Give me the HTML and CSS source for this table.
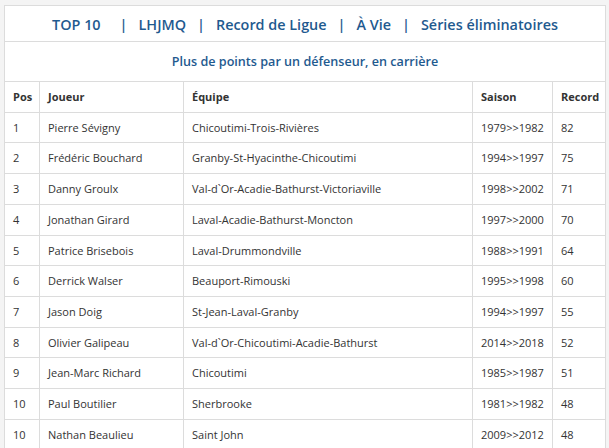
FILE: index.html
```html
<!DOCTYPE html>
<html lang="fr">
<head>
<meta charset="utf-8">
<title>Records LHJMQ</title>
<link rel="stylesheet" href="styles.css">
</head>
<body>
<table class="records">
  <colgroup>
    <col class="c-pos">
    <col class="c-joueur">
    <col class="c-equipe">
    <col class="c-saison">
    <col class="c-record">
  </colgroup>
  <thead>
    <tr class="nav-row">
      <td colspan="5">
        <nav class="nav">
          <a class="nav-link nav-top">TOP 10</a>
          <span class="sep">|</span>
          <a class="nav-link">LHJMQ</a>
          <span class="sep">|</span>
          <a class="nav-link">Record de Ligue</a>
          <span class="sep">|</span>
          <a class="nav-link">À Vie</a>
          <span class="sep">|</span>
          <a class="nav-link">Séries éliminatoires</a>
        </nav>
      </td>
    </tr>
    <tr class="title-row">
      <td colspan="5">Plus de points par un défenseur, en carrière</td>
    </tr>
    <tr class="head-row">
      <th>Pos</th>
      <th>Joueur</th>
      <th>Équipe</th>
      <th>Saison</th>
      <th>Record</th>
    </tr>
  </thead>
  <tbody>
    <tr><td>1</td><td>Pierre Sévigny</td><td>Chicoutimi-Trois-Rivières</td><td>1979&gt;&gt;1982</td><td>82</td></tr>
    <tr><td>2</td><td>Frédéric Bouchard</td><td>Granby-St-Hyacinthe-Chicoutimi</td><td>1994&gt;&gt;1997</td><td>75</td></tr>
    <tr><td>3</td><td>Danny Groulx</td><td>Val-d`Or-Acadie-Bathurst-Victoriaville</td><td>1998&gt;&gt;2002</td><td>71</td></tr>
    <tr><td>4</td><td>Jonathan Girard</td><td>Laval-Acadie-Bathurst-Moncton</td><td>1997&gt;&gt;2000</td><td>70</td></tr>
    <tr><td>5</td><td>Patrice Brisebois</td><td>Laval-Drummondville</td><td>1988&gt;&gt;1991</td><td>64</td></tr>
    <tr><td>6</td><td>Derrick Walser</td><td>Beauport-Rimouski</td><td>1995&gt;&gt;1998</td><td>60</td></tr>
    <tr><td>7</td><td>Jason Doig</td><td>St-Jean-Laval-Granby</td><td>1994&gt;&gt;1997</td><td>55</td></tr>
    <tr><td>8</td><td>Olivier Galipeau</td><td>Val-d`Or-Chicoutimi-Acadie-Bathurst</td><td>2014&gt;&gt;2018</td><td>52</td></tr>
    <tr><td>9</td><td>Jean-Marc Richard</td><td>Chicoutimi</td><td>1985&gt;&gt;1987</td><td>51</td></tr>
    <tr><td>10</td><td>Paul Boutilier</td><td>Sherbrooke</td><td>1981&gt;&gt;1982</td><td>48</td></tr>
    <tr><td>10</td><td>Nathan Beaulieu</td><td>Saint John</td><td>2009&gt;&gt;2012</td><td>48</td></tr>
  </tbody>
</table>
</body>
</html>
```

FILE: styles.css
```css
html, body {
  margin: 0;
  padding: 0;
  background: #f4f4f4;
}

body {
  padding: 5px 4px 0 4px;
  font-family: "Open Sans", "DejaVu Sans", sans-serif;
  color: #333;
}

.records {
  border-collapse: collapse;
  table-layout: fixed;
  width: 601px;
  background: #fff;
  border: 1px solid #dcdcdc;
}

.c-pos { width: 35px; }
.c-joueur { width: 144px; }
.c-equipe { width: 289px; }
.c-saison { width: 80px; }
.c-record { width: 53px; }

.records td,
.records th {
  border: 1px solid #dcdcdc;
  padding: 7px 8px;
  font-size: 11px;
  line-height: 15.7px;
  text-align: left;
  white-space: nowrap;
  overflow: hidden;
}

.records tbody td {
  color: #333;
  font-weight: 400;
}

.records th {
  font-weight: 700;
  color: #333;
}

.nav-row td {
  height: 35px;
  padding: 0;
  text-align: center;
}

.nav {
  display: flex;
  justify-content: center;
  align-items: center;
  font-size: 14.4px;
  font-weight: 600;
  color: #1f5a8f;
  padding-top: 2px;
}

.nav-link {
  color: #1f5a8f;
  text-decoration: none;
}

.nav-top {
  margin-right: 8px;
}

.sep {
  margin: 0 11px;
  font-weight: 600;
}

.title-row td {
  height: 39px;
  padding: 0;
  text-align: center;
  font-size: 12.6px;
  font-weight: 600;
  color: #1f5a8f;
}
```
